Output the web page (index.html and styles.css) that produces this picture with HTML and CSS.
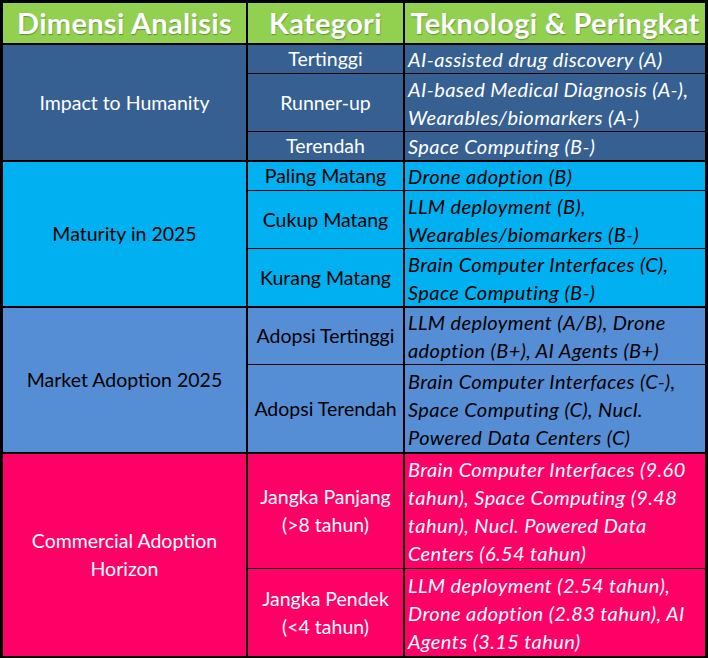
FILE: index.html
```html
<!DOCTYPE html>
<html lang="id">
<head>
<meta charset="utf-8">
<title>Dimensi Analisis</title>
<link rel="stylesheet" href="styles.css">
</head>
<body>
<table class="matrix">
  <thead>
    <tr>
      <th class="c1">Dimensi Analisis</th>
      <th class="c2">Kategori</th>
      <th class="c3">Teknologi &amp; Peringkat</th>
    </tr>
  </thead>
  <tbody class="g g-impact">
    <tr class="r-a">
      <td class="dim" rowspan="3">Impact to Humanity</td>
      <td class="cat">Tertinggi</td>
      <td class="tech">AI-assisted drug discovery (A)</td>
    </tr>
    <tr class="r-b">
      <td class="cat">Runner-up</td>
      <td class="tech">AI-based Medical Diagnosis (A-),<br>Wearables/biomarkers (A-)</td>
    </tr>
    <tr class="r-c last">
      <td class="cat">Terendah</td>
      <td class="tech">Space Computing (B-)</td>
    </tr>
  </tbody>
  <tbody class="g g-maturity">
    <tr class="r-d">
      <td class="dim" rowspan="3">Maturity in 2025</td>
      <td class="cat">Paling Matang</td>
      <td class="tech">Drone adoption (B)</td>
    </tr>
    <tr class="r-e">
      <td class="cat">Cukup Matang</td>
      <td class="tech">LLM deployment (B),<br>Wearables/biomarkers (B-)</td>
    </tr>
    <tr class="r-f last">
      <td class="cat">Kurang Matang</td>
      <td class="tech">Brain Computer Interfaces (C),<br>Space Computing (B-)</td>
    </tr>
  </tbody>
  <tbody class="g g-market">
    <tr class="r-g">
      <td class="dim" rowspan="2">Market Adoption 2025</td>
      <td class="cat">Adopsi Tertinggi</td>
      <td class="tech">LLM deployment (A/B), Drone<br>adoption (B+), AI Agents (B+)</td>
    </tr>
    <tr class="r-h last">
      <td class="cat">Adopsi Terendah</td>
      <td class="tech">Brain Computer Interfaces (C-),<br>Space Computing (C), Nucl.<br>Powered Data Centers (C)</td>
    </tr>
  </tbody>
  <tbody class="g g-commercial">
    <tr class="r-i">
      <td class="dim" rowspan="2">Commercial Adoption<br>Horizon</td>
      <td class="cat">Jangka Panjang<br>(&gt;8 tahun)</td>
      <td class="tech">Brain Computer Interfaces (9.60<br>tahun), Space Computing (9.48<br>tahun), Nucl. Powered Data<br>Centers (6.54 tahun)</td>
    </tr>
    <tr class="r-j last">
      <td class="cat">Jangka Pendek<br>(&lt;4 tahun)</td>
      <td class="tech">LLM deployment (2.54 tahun),<br>Drone adoption (2.83 tahun), AI<br>Agents (3.15 tahun)</td>
    </tr>
  </tbody>
</table>
</body>
</html>
```

FILE: styles.css
```css
html, body {
  margin: 0;
  padding: 0;
  background: #ffffff;
}

.matrix {
  border-collapse: separate;
  border-spacing: 0;
  border: 3px solid #000;
  table-layout: fixed;
  width: 708px;
  font-family: Lato, "Open Sans", sans-serif;
  font-size: 19.5px;
}

.matrix th,
.matrix td {
  box-sizing: border-box;
  padding: 0;
  border: 0 solid #000;
  vertical-align: middle;
  line-height: 28px;
}

.matrix th {
  background: #92d050;
  color: #ffffff;
  font-weight: bold;
  font-size: 29px;
  letter-spacing: 0.3px;
  height: 42px;
  line-height: 38px;
  border-bottom-width: 2px;
  text-align: center;
  text-shadow: 0.5px 0.5px 1px rgba(60, 90, 40, 0.55);
}

.matrix .c1 { width: 245px; border-right-width: 2px; }
.matrix .c2 { width: 157px; border-right-width: 2px; }
.matrix .c3 { width: 300px; }

.dim {
  text-align: center;
  border-right-width: 2px !important;
  border-bottom-width: 2px !important;
}

.cat {
  text-align: center;
  border-right-width: 2px !important;
  border-bottom-width: 1px !important;
}

.tech {
  text-align: left;
  font-style: italic;
  font-size: 20px;
  letter-spacing: 0.4px;
  padding-left: 3px !important;
  border-bottom-width: 1px !important;
  white-space: nowrap;
}

.last .cat,
.last .tech {
  border-bottom-width: 2px !important;
}

.g-commercial .last .cat,
.g-commercial .last .tech,
.g-commercial .dim {
  border-bottom-width: 0 !important;
}

.g-impact td { background: #376092; color: #ffffff; }
.g-maturity td { background: #00b0f0; color: #000000; }
.g-market td { background: #558ed5; color: #000000; }
.g-commercial td { background: #ff0066; color: #ffffff; }

.r-a td { height: 29px; }
.r-b td { height: 58px; }
.r-c td { height: 29px; }
.r-d td { height: 29px; }
.r-e td { height: 58px; }
.r-f td { height: 59px; }
.r-g td { height: 57px; }
.r-h td { height: 89px; }
.r-i td { height: 115px; }
.r-j td { height: 87px; }
```
